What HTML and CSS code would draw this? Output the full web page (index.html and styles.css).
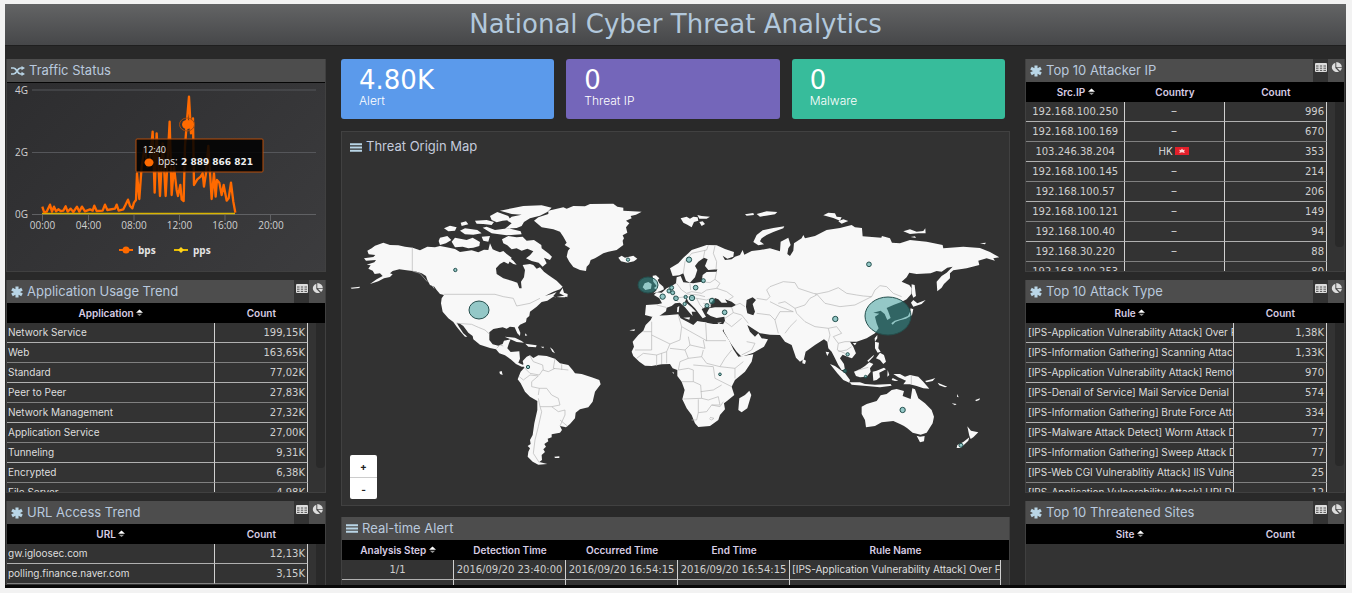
FILE: index.html
```html
<!DOCTYPE html>
<html lang="en">
<head>
<meta charset="utf-8">
<title>National Cyber Threat Analytics</title>
<link rel="stylesheet" href="styles.css">
</head>
<body>
<svg class="sprite" aria-hidden="true">
  <symbol id="i-star" viewBox="0 0 12 12"><path d="M6 .4v11.200M1 3.100l10 5.800M1 8.900l10-5.800" stroke="currentColor" stroke-width="3.100"/></symbol>
  <symbol id="i-shuffle" viewBox="0 0 14 10"><path d="M0 2h2.500C6 2 6 8 9.500 8H12M0 8h2.500C6 8 6 2 9.500 2H12" fill="none" stroke="currentColor" stroke-width="1.700"/><path d="M10.500 0L14 2l-3.500 2.200zM10.500 5.800L14 8l-3.500 2z" fill="currentColor"/></symbol>
  <symbol id="i-bars" viewBox="0 0 12 9"><path d="M0 1.200h12M0 4.500h12M0 7.800h12" stroke="currentColor" stroke-width="1.900"/></symbol>
  <symbol id="i-table" viewBox="0 0 12 9"><rect width="12" height="9" rx="1" fill="currentColor"/><path d="M1 3h10M1 5.200h10M1 7.400h10" stroke="#444" stroke-width=".9"/><path d="M4.200 2v6M7.800 2v6" stroke="currentColor" stroke-width="1.300"/></symbol>
  <symbol id="i-pie" viewBox="0 0 12 11"><path d="M5.300 .8V6l3.700 3.800A5.300 4.800 0 1 1 5.300 .8z" fill="currentColor"/><path d="M6.300 0A5.600 5 0 0 1 11.800 4.900H6.300zM6.900 5.800h5a5.300 4.800 0 0 1-1.800 3.300z" fill="currentColor"/></symbol>
  <symbol id="i-sort" viewBox="0 0 8 8"><path d="M0 3.700L4 0l4 3.700z" fill="#fff"/><path d="M1 4.800h6L4 7.500z" fill="#999"/></symbol>
</svg>

<div class="app">
  <header class="banner"><h1>National Cyber Threat Analytics</h1></header>
  <main class="board">
    <div class="side">
      <section class="panel">
        <div class="panel-head plain"><svg class="ico wide"><use href="#i-shuffle"/></svg><h2>Traffic Status</h2></div>
        <svg class="chart" viewBox="7 83 318 188" role="img" aria-label="Traffic by time of day">
          <path d="M32 90h284M32 152.500h284" stroke="#55565a"/>
          <path d="M32 214.500h284M42.500 214v7M88.500 214v7M134 214v7M179.500 214v7M225 214v7M270.500 214v7" stroke="#606164"/>
          <g class="axis">
            <text x="15" y="94">4G</text><text x="15" y="156">2G</text><text x="15" y="218">0G</text>
            <g text-anchor="middle"><text x="42.500" y="229">00:00</text><text x="88.500" y="229">04:00</text><text x="134" y="229">08:00</text><text x="179.500" y="229">12:00</text><text x="225" y="229">16:00</text><text x="271" y="229">20:00</text></g>
          </g>
          <path d="M42 213.500h193" stroke="#d8b400" stroke-width="1.500"/>
          <polyline transform="scale(.3333)" fill="none" stroke="#ff6a00" stroke-width="7" stroke-linejoin="round" points="127,620 132,636 140,635 150,614 156,635 162,620 168,634 175,628 182,633 190,632 197,619 203,635 212,626 220,636 231,620 238,635 246,620 255,634 270,628 278,632 283,617 290,633 308,632 315,614 322,630 345,626 350,614 356,632 370,628 376,616 384,599 390,618 397,625 402,608 408,600 411,520 418,597 425,500 434,440 442,500 450,480 458,395 464,578 470,400 480,588 488,430 492,500 497,588 509,365 515,585 522,500 530,570 534,588 541,555 545,598 551,603 555,440 560,373 567,290 573,400 579,355 582,555 592,538 602,530 608,520 612,560 618,520 625,438 635,597 642,520 647,590 651,540 658,548 665,585 671,555 680,602 686,595 693,548 700,605 706,638"/>
          <ellipse cx="187" cy="124.500" rx="7.500" ry="6.500" fill="none" stroke="#a64b0d"/>
          <ellipse cx="187" cy="124.500" rx="5" ry="4.500" fill="#ff6a00"/>
          <rect x="136" y="139" width="127" height="33" rx="1" fill="#000" fill-opacity=".86" stroke="#b84e0a"/>
          <g class="tip"><text x="143" y="153" class="tiny">12:40</text><ellipse cx="149" cy="162.500" rx="4.500" ry="4" fill="#ff6a00"/><text x="158" y="165">bps: <tspan class="strong" x="181">2 889 866 821</tspan></text></g>
          <g class="legend"><path d="M119 250h14" stroke="#ff6a00" stroke-width="2"/><circle cx="126" cy="250" r="3.500" fill="#ff6a00"/><text x="138" y="254">bps</text><path d="M174 250h14" stroke="#e8bd00" stroke-width="2"/><path d="M181 247l3 3-3 3-3-3z" fill="#ffd21c"/><text x="193" y="254">pps</text></g>
        </svg>
      </section>

      <section class="panel">
        <div class="panel-head"><svg class="ico"><use href="#i-star"/></svg><h2>Application Usage Trend</h2>
          <div class="tools"><button class="on" aria-label="Table view"><svg><use href="#i-table"/></svg></button><button aria-label="Pie view"><svg><use href="#i-pie"/></svg></button></div></div>
        <div class="grid">
          <table>
            <colgroup><col class="c-app"><col></colgroup>
            <thead><tr><th>Application <svg class="sort"><use href="#i-sort"/></svg></th><th>Count</th></tr></thead>
            <tbody>
              <tr><td>Network Service</td><td class="num">199,15K</td></tr>
              <tr><td>Web</td><td class="num">163,65K</td></tr>
              <tr><td>Standard</td><td class="num">77,02K</td></tr>
              <tr><td>Peer to Peer</td><td class="num">27,83K</td></tr>
              <tr><td>Network Management</td><td class="num">27,32K</td></tr>
              <tr><td>Application Service</td><td class="num">27,00K</td></tr>
              <tr><td>Tunneling</td><td class="num">9,31K</td></tr>
              <tr><td>Encrypted</td><td class="num">6,38K</td></tr>
              <tr><td>File Server</td><td class="num">4,98K</td></tr>
            </tbody>
          </table>
          <div class="rail"><span></span></div>
        </div>
      </section>

      <section class="panel">
        <div class="panel-head"><svg class="ico"><use href="#i-star"/></svg><h2>URL Access Trend</h2>
          <div class="tools"><button class="on" aria-label="Table view"><svg><use href="#i-table"/></svg></button><button aria-label="Pie view"><svg><use href="#i-pie"/></svg></button></div></div>
        <div class="grid">
          <table>
            <colgroup><col class="c-app"><col></colgroup>
            <thead><tr><th>URL <svg class="sort"><use href="#i-sort"/></svg></th><th>Count</th></tr></thead>
            <tbody>
              <tr><td>gw.igloosec.com</td><td class="num">12,13K</td></tr>
              <tr><td>polling.finance.naver.com</td><td class="num">3,15K</td></tr>
            </tbody>
          </table>
          <div class="rail"><span></span></div>
        </div>
      </section>
    </div>

    <div class="center">
      <div class="cards">
        <div class="card blue"><strong>4.80K</strong><span>Alert</span></div>
        <div class="card violet"><strong>0</strong><span>Threat IP</span></div>
        <div class="card green"><strong>0</strong><span>Malware</span></div>
      </div>

      <section class="map-panel">
        <div class="map-title"><svg class="ico"><use href="#i-bars"/></svg><h2>Threat Origin Map</h2></div>
        <svg class="map" viewBox="342 162 667 343" role="img" aria-label="World map of threat origins">
          <g class="land">
            <!-- North America -->
            <g transform="translate(340 190) scale(.3333)">
              <path d="M82 182L95 175 105 167 130 158 150 165 175 166 195 170 218 173 240 181 262 170 285 172 300 168 320 172 345 177 360 186 395 181 415 187 432 179 445 180 450 160 458 178 468 182 480 187 490 183 500 192 515 203 505 222 492 215 480 222 468 235 470 252 490 265 515 272 532 278 538 295 545 295 543 275 552 262 555 240 548 225 570 222 580 225 590 236 600 232 612 245 625 255 650 272 668 290 660 298 640 305 615 318 635 312 650 306 640 318 645 322 683 315 675 322 660 322 640 320 622 332 605 336 590 350 570 365 568 378 560 385 558 396 540 404 534 412 541 428 540 438 532 430 524 412 510 410 500 416 488 412 460 417 448 427 448 450 458 463 475 467 488 462 492 452 512 448 507 460 502 475 512 486 538 484 540 506 535 518 548 524 562 518 570 528 560 530 545 530 528 522 512 508 495 496 478 490 468 478 450 474 420 464 400 448 398 438 385 428 370 408 358 400 350 398 358 412 370 430 382 440 375 440 362 425 350 410 340 396 325 385 308 365 303 340 305 325 312 315 300 312 290 300 283 290 270 285 262 270 258 258 245 250 230 245 218 243 200 241 178 238 158 243 150 250 158 253 150 261 132 265 115 274 90 282 110 268 128 258 120 250 104 252 98 242 85 236 92 226 80 224 103 217 108 210 78 212 72 205 100 201 106 195 86 193z"/>
              <path d="M300 143L322 138 334 150 318 160 300 165 296 153zM335 155L345 143 380 150 398 143 420 156 418 168 400 173 385 175 368 170 345 172zM312 115L330 107 350 112 345 122 325 124zM362 98L378 94 385 103 365 108zM360 122L375 115 412 120 425 130 400 134 375 133zM405 92L440 90 462 96 455 105 430 102 410 101zM428 113L440 110 465 120 505 115 542 124 545 133 500 136 455 130zM425 140L450 138 445 155 430 152zM450 78L472 66 505 78 512 90 488 92 470 97 455 90zM480 62L520 54 550 48 605 46 635 53 622 66 600 77 570 85 552 96 545 108 530 114 495 116 515 100 502 92 515 80 545 74 515 72z"/>
              <path d="M486 148L505 138 530 142 548 140 560 152 582 150 604 165 605 175 625 190 636 200 630 210 612 203 620 220 608 230 596 218 575 213 558 205 570 196 580 184 562 176 545 182 530 175 515 178 502 166 490 160zM505 200L520 212 530 224 520 222 506 213zM658 310L668 294 672 308 683 312 682 322 670 316z"/>
              <path d="M32 293L60 290 58 294 35 296zM494 440L525 443 545 453 552 458 530 456 508 446zM556 461L590 466 588 472 565 470zM602 470L612 470 610 475zM630 472L638 478 645 490 637 485zM555 430L562 436 556 438zM275 280L284 298 278 290z"/>
            </g>
            <!-- Greenland, Europe, Asia -->
            <g transform="translate(540 190) scale(.3333)">
              <path d="M-18 92L-5 82 25 72 25 62 70 52 80 56 100 48 135 49 150 42 220 41 232 50 250 53 250 62 305 65 288 74 272 78 275 85 258 92 268 100 258 112 262 128 248 136 252 145 248 152 250 165 230 180 205 185 190 190 165 205 152 210 148 222 140 230 138 243 120 240 100 231 88 215 80 200 84 182 90 175 74 165 80 158 70 140 60 125 40 118 5 112z"/>
              <path d="M235 203L245 197 255 203 280 197 292 206 282 214 262 218 243 214zM338 257L348 256 358 265 353 270 358 280 370 290 372 298 360 304 340 310 350 300 342 294 350 288 340 275zM308 292L314 280 325 276 335 282 333 296 316 300zM422 85L440 80 450 86 460 80 473 82 475 92 462 96 455 112 442 104 430 98zM472 75L485 78 510 80 500 86 478 86zM478 96L488 94 495 102 485 108zM615 73L640 69 642 75 620 77zM650 72L680 64 712 66 705 73 678 77 660 80zM640 156L650 135 668 121 700 114 733 109 730 115 700 126 680 135 665 145 660 154 672 163 655 166z"/>
              <path d="M850 76L865 68 885 70 890 80 905 82 900 92 880 84zM895 94L910 88 925 93 905 101zM1090 124L1110 118 1130 125 1150 123 1156 115 1157 130 1135 130 1110 132zM1112 141L1125 139 1128 144zM1320 160L1338 158 1335 163z"/>
              <path fill-rule="evenodd" d="M390 235L415 220 430 203 445 190 455 180 480 172 500 165 530 166 555 177 582 186 580 200 562 206 548 197 555 210 575 208 585 200 600 195 608 180 613 194 635 183 660 180 690 175 720 184 722 155 745 143 752 165 745 175 742 192 750 198 760 182 762 160 785 145 790 135 795 145 825 138 860 120 900 114 935 105 945 112 966 114 968 139 1024 143 1026 138 1050 145 1056 158 1080 160 1110 150 1160 155 1208 165 1210 175 1270 170 1320 174 1350 186 1378 202 1360 205 1365 212 1340 205 1315 212 1318 225 1280 235 1240 241 1230 250 1230 265 1212 282 1205 293 1192 304 1190 275 1205 258 1220 248 1238 230 1222 233 1205 245 1190 243 1172 250 1130 252 1108 248 1100 262 1085 275 1108 285 1115 295 1114 312 1100 328 1086 335 1062 344 1040 354 1044 362 1052 384 1042 390 1034 372 1022 362 1000 368 1018 371 1005 380 1010 400 1016 415 1005 430 980 445 950 455 930 455 940 470 948 490 936 505 922 500 908 494 900 505 912 522 915 540 905 540 895 525 885 505 875 485 865 475 862 455 852 448 825 465 797 485 792 507 780 515 768 503 755 465 735 455 720 435 690 434 660 430 645 420 622 405 630 425 645 440 655 430 665 445 684 448 672 470 640 488 605 500 590 485 572 460 552 425 548 405 555 392 553 380 530 384 512 378 500 370 508 355 525 352 575 352 588 345 575 335 555 328 562 338 545 338 535 328 525 324 512 340 512 352 495 352 485 357 493 372 498 380 488 385 478 372 465 355 445 335 440 325 435 335 455 352 468 365 455 365 458 378 450 370 435 352 420 338 405 340 395 348 380 353 378 364 358 378 335 380 315 375 318 345 352 343 366 340 358 325 342 315 350 307 365 308 380 295 395 288 408 280 410 262 422 258 430 277 460 280 485 275 488 255 500 246 530 245 532 238 505 240 495 228 503 208 492 203 475 215 465 228 472 240 465 262 450 278 438 272 430 250 418 256 398 258zM620 330L638 322 648 330 638 342 645 365 640 376 622 370 618 350z"/>
              <path d="M430 383L450 382 448 389zM412 352L418 348 416 367 411 366zM485 395L502 398 490 400zM532 398L546 397 536 402z"/>
              <path d="M1115 283L1124 285 1128 318 1120 323 1115 310zM1113 338L1120 330 1132 340 1157 330 1145 342 1120 350zM1054 400L1064 392 1084 386 1104 378 1110 366 1112 355 1120 358 1116 376 1098 386 1080 391 1066 396 1058 404zM1004 445L1012 435 1012 445 1005 455zM938 460L950 458 945 466zM857 485L868 487 862 498z"/>
            </g>
            <!-- South America, Africa -->
            <g transform="translate(480 320) scale(.3333)">
              <path d="M113 178L122 155 133 143 128 123 140 110 150 106 160 114 175 106 200 108 225 116 240 130 265 135 278 150 285 160 305 162 335 172 358 180 362 193 345 215 338 245 325 262 300 268 287 278 285 295 270 312 258 322 240 318 246 330 240 338 215 343 215 352 203 356 205 364 193 372 198 380 190 388 195 396 185 405 186 420 178 426 202 432 175 434 158 425 143 410 145 395 150 385 143 378 152 372 150 360 158 345 163 310 172 270 172 243 150 230 135 215 122 190z"/>
              <path d="M455 95L462 80 458 65 475 45 490 32 497 15 512 0 518 -12 560 -14 595 -17 602 -5 622 5 640 15 652 3 680 8 700 12 728 12 735 22 728 32 748 62 760 88 775 110 790 108 820 103 815 125 795 155 765 180 755 200 763 225 742 242 732 250 735 268 720 285 715 300 690 318 655 321 645 310 635 285 620 265 607 238 614 210 605 185 592 168 592 150 578 145 570 132 545 133 515 138 495 137 478 125 460 108z"/>
              <path d="M775 270L778 235 795 225 808 212 814 225 802 265 785 277zM58 155L65 153 68 165 60 162zM223 410L238 409 238 414 225 414zM577 155L582 158 580 162zM448 31L465 28 463 33z"/>
            </g>
            <!-- Oceania and the archipelagos -->
            <g transform="translate(750 320) scale(.3333)">
              <path d="M335 260L350 252 380 243 392 226 410 222 425 210 440 207 462 213 458 228 482 237 487 205 495 208 505 235 525 250 545 270 552 290 548 310 530 338 512 344 488 338 472 325 462 318 450 312 430 303 395 307 375 318 348 322 345 300 335 282zM500 347L510 350 524 348 522 364 510 367zM652 319L663 332 685 337 670 352 662 357 658 347zM658 352L655 362 632 384 620 384 622 375 640 366z"/>
              <path d="M240 132L255 138 285 160 300 180 298 188 280 180 262 160zM298 186L330 187 345 192 375 194 422 192 425 197 390 202 350 198 305 194zM312 155L330 148 345 138 358 127 370 132 360 145 362 155 350 170 330 172 318 168zM368 155L380 152 402 143 408 148 388 158 390 172 380 180 370 182zM413 150L418 165 412 170zM430 162L450 162 465 170 480 165 505 170 520 185 538 206 520 205 500 198 480 193 460 193 468 182 445 172zM525 183L545 178 556 174 548 183 530 187zM563 188L592 200 585 202 568 196zM375 65L387 68 385 85 392 95 383 98 375 85zM378 115L390 98 402 105 408 125 400 132 390 120zM352 122L372 104 370 110 355 126zM158 116L168 122 165 132 157 130zM428 174L445 182 435 183 425 180zM605 250L620 252 615 256zM622 222L626 232 621 230zM676 240L690 235 688 240 678 244z"/>
            </g>
          </g>
          <g class="border">
            <g transform="translate(340 190) scale(.3333)"><path d="M217 173V243L240 250 262 275M312 313H465L490 320 520 325 530 348 570 340 600 325M350 400L395 403 415 412 435 420 448 432M470 475L480 465 490 468"/></g>
            <g transform="translate(540 190) scale(.3333)"><path d="M430 250L435 215 455 190 500 180 505 165M490 205L495 180M528 240L530 215 520 190 525 168M530 245L525 268 540 280 530 295 560 305 580 320 565 330M410 280L425 300 440 310 455 305 485 310 500 300 530 295M485 275L510 278 525 268M450 280L452 300M385 295L405 310 400 325 415 335M400 325L440 320 470 325 500 330 520 322M440 312L475 315 495 320M470 325L480 345 490 355M350 345L378 352M490 340L515 342M575 352L580 368 555 385M588 345L600 340 615 350M580 368L605 375 625 400M605 385L575 410 555 395M650 370L690 375 705 390 715 430M650 325L680 330 690 320 680 300 690 290 730 275 765 278 775 295 820 310 830 312 855 340 900 350 945 345 995 320 970 318 950 315 920 310 895 293 865 305 825 313M995 320L1005 300 1020 287 1040 290 1060 310 1085 320M830 315L810 325 795 345 765 355 770 370 795 395 825 410 865 415 890 410 905 430 880 440 895 460 915 455 935 455M690 335L720 350 760 365M705 390L720 365 760 365M735 430L750 410 770 390M865 415L870 435 865 455M895 460L892 480 915 490M715 340L735 335 765 355M605 495L635 480 645 460 620 455"/></g>
            <g transform="translate(480 320) scale(.3333)"><path d="M133 143L150 160 178 165 188 150 205 155 225 145M150 108L160 125 188 135 190 150M225 116L220 145 265 150M245 133V150M118 170L130 180 150 165 175 168 155 185 155 200 178 205 175 225M178 205L200 205 215 225 235 235 240 255 215 260 180 260 175 235M180 260L185 275 175 320 165 360 160 400 178 428M215 260L235 275 255 270 255 285 240 318M240 300L262 318M515 5L515 45 570 72 600 60 605 20 595 -15M605 20L680 62 677 8M677 62H738M515 45V90H465M490 35H515M570 72L560 95 530 105 490 100 470 115M530 105V138M545 100V132M560 95L560 130M570 85L615 90 630 75 625 50M615 90L625 115 600 125 595 150M630 75L675 85 670 60M625 115L665 110 680 130 720 140 735 115 755 90M665 110L670 90M720 140L765 145 790 125M765 145V175M700 140L705 175 755 200M595 150L625 145 640 150 640 185 605 185M640 135L700 140M640 185L662 195 665 235 610 237M662 215L700 210 725 195M665 235L685 240 715 230 720 255 695 255 680 275 655 278 655 238M655 278L650 300 635 300M695 255L720 260 730 245M690 292L702 295 695 300 688 296"/></g>
            <g transform="translate(750 320) scale(.3333)"><path d="M484 167V194M265 95L290 90 305 80M325 150L355 142"/></g>
          </g>
          <g class="mark">
            <ellipse cx="479" cy="310" rx="10" ry="9"/><ellipse cx="888" cy="316" rx="23" ry="19"/><ellipse cx="648" cy="285" rx="10" ry="8"/>
            <g transform="translate(540 190) scale(.3333)" stroke-width="3"><circle cx="447" cy="209" r="8"/><circle cx="490" cy="272" r="6"/><circle cx="467" cy="293" r="7"/><circle cx="395" cy="293" r="6"/><circle cx="387" cy="303" r="6"/><circle cx="398" cy="308" r="6"/><circle cx="368" cy="320" r="8"/><circle cx="408" cy="325" r="7"/><circle cx="437" cy="321" r="5"/><circle cx="456" cy="324" r="8"/><circle cx="434" cy="342" r="5"/><circle cx="516" cy="333" r="8"/><circle cx="501" cy="347" r="6"/><circle cx="554" cy="367" r="7"/><circle cx="264" cy="209" r="5"/><circle cx="-254" cy="240" r="5"/><circle cx="-36" cy="531" r="5"/><circle cx="987" cy="223" r="7"/><circle cx="886" cy="387" r="8"/><circle cx="923" cy="493" r="5"/><circle cx="915" cy="543" r="5"/><circle cx="1088" cy="660" r="8"/><circle cx="1263" cy="766" r="6"/><circle cx="977" cy="560" r="4"/><circle cx="540" cy="553" r="4"/></g>
          </g>
        </svg>
        <div class="zoom"><button>+</button><button>-</button></div>
      </section>

      <section class="panel alerts">
        <div class="panel-head tight"><svg class="ico"><use href="#i-bars"/></svg><h2>Real-time Alert</h2></div>
        <div class="grid">
          <table class="mid">
            <colgroup><col class="c-time"><col class="c-time"><col class="c-time"><col class="c-time"><col></colgroup>
            <thead><tr><th>Analysis Step <svg class="sort"><use href="#i-sort"/></svg></th><th>Detection Time</th><th>Occurred Time</th><th>End Time</th><th>Rule Name</th></tr></thead>
            <tbody>
              <tr><td class="digits">1/1</td><td class="digits">2016/09/20 23:40:00</td><td class="digits">2016/09/20 16:54:15</td><td class="digits">2016/09/20 16:54:15</td><td class="rule">[IPS-Application Vulnerability Attack] Over Flow</td></tr>
              <tr><td></td><td></td><td></td><td></td><td></td></tr>
            </tbody>
          </table>
        </div>
      </section>
    </div>

    <div class="side">
      <section class="panel">
        <div class="panel-head"><svg class="ico"><use href="#i-star"/></svg><h2>Top 10 Attacker IP</h2>
          <div class="tools"><button class="on" aria-label="Table view"><svg><use href="#i-table"/></svg></button><button aria-label="Pie view"><svg><use href="#i-pie"/></svg></button></div></div>
        <div class="grid">
          <table class="mid">
            <colgroup><col class="c-ip"><col class="c-ip"><col></colgroup>
            <thead><tr><th>Src.IP <svg class="sort"><use href="#i-sort"/></svg></th><th>Country</th><th>Count</th></tr></thead>
            <tbody>
              <tr><td class="digits">192.168.100.250</td><td>–</td><td class="num">996</td></tr>
              <tr><td class="digits">192.168.100.169</td><td>–</td><td class="num">670</td></tr>
              <tr><td class="digits">103.246.38.204</td><td>HK <svg class="flag" viewBox="0 0 14 8"><rect width="14" height="8" fill="#e3202b"/><path d="M7 1.500l1 1.500 2-.3L9 4.300l.8 1.600L7 5.200l-2.800.7.8-1.600-1-1.600L6 3z" fill="#fbd5d5"/></svg></td><td class="num">353</td></tr>
              <tr><td class="digits">192.168.100.145</td><td>–</td><td class="num">214</td></tr>
              <tr><td class="digits">192.168.100.57</td><td>–</td><td class="num">206</td></tr>
              <tr><td class="digits">192.168.100.121</td><td>–</td><td class="num">149</td></tr>
              <tr><td class="digits">192.168.100.40</td><td>–</td><td class="num">94</td></tr>
              <tr><td class="digits">192.168.30.220</td><td>–</td><td class="num">88</td></tr>
              <tr><td class="digits">192.168.100.253</td><td>–</td><td class="num">80</td></tr>
            </tbody>
          </table>
          <div class="rail"><span></span></div>
        </div>
      </section>

      <section class="panel">
        <div class="panel-head"><svg class="ico"><use href="#i-star"/></svg><h2>Top 10 Attack Type</h2>
          <div class="tools"><button class="on" aria-label="Table view"><svg><use href="#i-table"/></svg></button><button aria-label="Pie view"><svg><use href="#i-pie"/></svg></button></div></div>
        <div class="grid">
          <table>
            <colgroup><col class="c-rule"><col></colgroup>
            <thead><tr><th>Rule <svg class="sort"><use href="#i-sort"/></svg></th><th>Count</th></tr></thead>
            <tbody>
              <tr><td class="rule">[IPS-Application Vulnerability Attack] Over Flow</td><td class="num">1,38K</td></tr>
              <tr><td class="rule">[IPS-Information Gathering] Scanning Attack</td><td class="num">1,33K</td></tr>
              <tr><td class="rule">[IPS-Application Vulnerability Attack] Remote</td><td class="num">970</td></tr>
              <tr><td class="rule">[IPS-Denail of Service] Mail Service Denial</td><td class="num">574</td></tr>
              <tr><td class="rule">[IPS-Information Gathering] Brute Force Attack</td><td class="num">334</td></tr>
              <tr><td class="rule">[IPS-Malware Attack Detect] Worm Attack Detect</td><td class="num">77</td></tr>
              <tr><td class="rule">[IPS-Information Gathering] Sweep Attack Detect</td><td class="num">77</td></tr>
              <tr><td class="rule">[IPS-Web CGI Vulnerablitiy Attack] IIS Vulnerability</td><td class="num">25</td></tr>
              <tr><td class="rule">[IPS-Application Vulnerability Attack] URI Decode</td><td class="num">12</td></tr>
            </tbody>
          </table>
          <div class="rail"><span class="short"></span></div>
        </div>
      </section>

      <section class="panel">
        <div class="panel-head"><svg class="ico"><use href="#i-star"/></svg><h2>Top 10 Threatened Sites</h2>
          <div class="tools"><button class="on" aria-label="Table view"><svg><use href="#i-table"/></svg></button><button aria-label="Pie view"><svg><use href="#i-pie"/></svg></button></div></div>
        <div class="grid">
          <table>
            <colgroup><col class="c-rule"><col></colgroup>
            <thead><tr><th>Site <svg class="sort"><use href="#i-sort"/></svg></th><th>Count</th></tr></thead>
          </table>
          <div class="rail"></div>
        </div>
      </section>
    </div>
  </main>
  <div class="baseline"></div>
</div>
</body>
</html>
```

FILE: styles.css
```css
* { box-sizing: border-box; }
body { margin: 0; padding: 4px 6px 5px 5px; background: #f2f2f2; font: 10px/19px Inter, "Liberation Sans", sans-serif; color: #dedede; }
h1, h2 { margin: 0; font-weight: 400; }
button { margin: 0; padding: 0; border: 0; font: inherit; color: inherit; background: none; }
.sprite { position: absolute; width: 0; height: 0; }

.app { display: flex; flex-direction: column; height: calc(100vh - 9px); min-height: 300px; background: #292929; overflow: hidden; }
.banner { flex: none; height: 42px; display: flex; align-items: center; justify-content: center; background: linear-gradient(#636465, #464749); border-bottom: 1px solid #1f1f1f; }
.banner h1 { font-family: "DejaVu Sans", sans-serif; font-size: 26px; line-height: 38px; color: #b2c8dc; padding-bottom: 2px; }
.board { flex: 1; min-height: 0; overflow: hidden; display: grid; grid-template-columns: 320fr 669fr 320fr; gap: 15px; padding: 13px 1px 0; align-items: start; }
.baseline { flex: none; height: 3px; background: #080808; }

.side { display: grid; gap: 8px; min-width: 0; }
.panel { height: 213px; background: #333; border: 1px solid #404040; border-top: 0; overflow: hidden; display: flex; flex-direction: column; }
.panel-head { flex: none; height: 23px; display: flex; align-items: center; gap: 4px; padding-left: 4px; background: #4d4d4d; color: #b9c9dd; }
.panel-head.plain { height: 24px; border-bottom: 1px solid #050505; }
.panel-head h2, .map-title h2 { font-size: 13px; line-height: 20px; padding-bottom: 2px; }
.ico { width: 12px; height: 12px; flex: none; color: #b9d5e6; }
.ico.wide { width: 14px; height: 10px; }
.tools { margin-left: auto; display: flex; align-self: stretch; color: #ddd; }
.tools button { width: 16px; padding-top: 3px; display: flex; justify-content: center; align-items: flex-start; }
.tools button.on { background: #333; width: 15px; }
.tools svg { width: 12px; height: 11px; }

.chart { display: block; width: 100%; height: auto; background: linear-gradient(135deg, #2d2d2f, #3c3c3e); font-family: "Open Sans", sans-serif; }
.axis { font-size: 10px; fill: #d0d0d0; }
.tip { font-size: 10px; fill: #eee; }
.tip .tiny { font-size: 9px; }
.tip .strong { font-family: "DejaVu Sans", sans-serif; font-size: 9px; font-weight: 700; }
.legend { font-size: 10px; font-weight: 700; fill: #e4e4e4; }

.grid { flex: 1; min-height: 0; overflow: hidden; display: flex; background: linear-gradient(#000 20px, transparent 20px); }
table { flex: 1; min-width: 0; width: 100%; align-self: flex-start; border-collapse: separate; border-spacing: 0; table-layout: fixed; }
th { height: 20px; padding: 0; font-weight: 600; line-height: 18px; color: #d8cde4; background: #000; white-space: nowrap; }
td { height: 20px; padding: 0 2px 0 1px; border-right: 1px solid #d0d0d0; border-bottom: 1px solid #b0b0b0; white-space: nowrap; overflow: hidden; }
tr:nth-child(even) td { border-bottom-color: #808080; }
.mid td { text-align: center; }
td.num, .mid td.num { text-align: right; padding-right: 2px; }
td.num, td.digits { font-family: "DejaVu Sans", sans-serif; color: #cfcfcf; }
td.rule, .mid td.rule { text-align: left; padding: 0 0 0 2px; }
.mid td.digits { padding: 0; }
.c-app { width: 69%; }
.c-rule { width: 69%; }
.c-ip { width: 33%; }
.c-time { width: 17%; }
.sort { width: 7px; height: 8px; }
.flag { width: 14px; height: 8px; }
.rail { flex: none; width: 17px; display: flex; justify-content: flex-end; padding-top: 20px; }
.rail span { width: 9px; height: 145px; background: #292929; border-radius: 0 0 4px 4px; }

.center { display: flex; flex-direction: column; min-width: 0; }
.cards { display: grid; grid-template-columns: repeat(3, 1fr); gap: 12px; padding-right: 5px; margin-bottom: 12px; }
.card { height: 60px; border-radius: 3px; padding: 8px 18px; display: flex; flex-direction: column; color: #fff; }
.card strong { font-family: "DejaVu Sans", sans-serif; font-size: 26px; line-height: 26px; font-weight: 400; }
.card span { font-size: 12px; line-height: 15px; font-weight: 300; }
.blue { background: #5b9aeb; }
.violet { background: #7466ba; }
.green { background: #37bc9b; }
.map-panel { position: relative; background: #323232; border: 1px solid #414141; margin-bottom: 11px; }
.map-title { height: 30px; display: flex; align-items: center; gap: 4px; padding-left: 8px; color: #c4cbdc; }
.map-title .ico, .tight .ico { height: 9px; }
.map { display: block; width: 100%; height: auto; }
.land { fill: #f8f8f8; }
.border { fill: none; stroke: #b4b4b4; stroke-width: 2; stroke-linejoin: round; }
.mark { fill: #2f9895; fill-opacity: .5; stroke: #244f4d; }
.zoom { position: absolute; left: 8px; bottom: 6px; width: 27px; border-radius: 2px; overflow: hidden; background: #fff; color: #222; }
.zoom button { display: block; width: 100%; height: 22px; font-weight: 700; line-height: 20px; }
.zoom button + button { border-top: 1px solid #ccc; }
.alerts .grid { padding-right: 8px; }
.rail .short { height: 143px; }
```
